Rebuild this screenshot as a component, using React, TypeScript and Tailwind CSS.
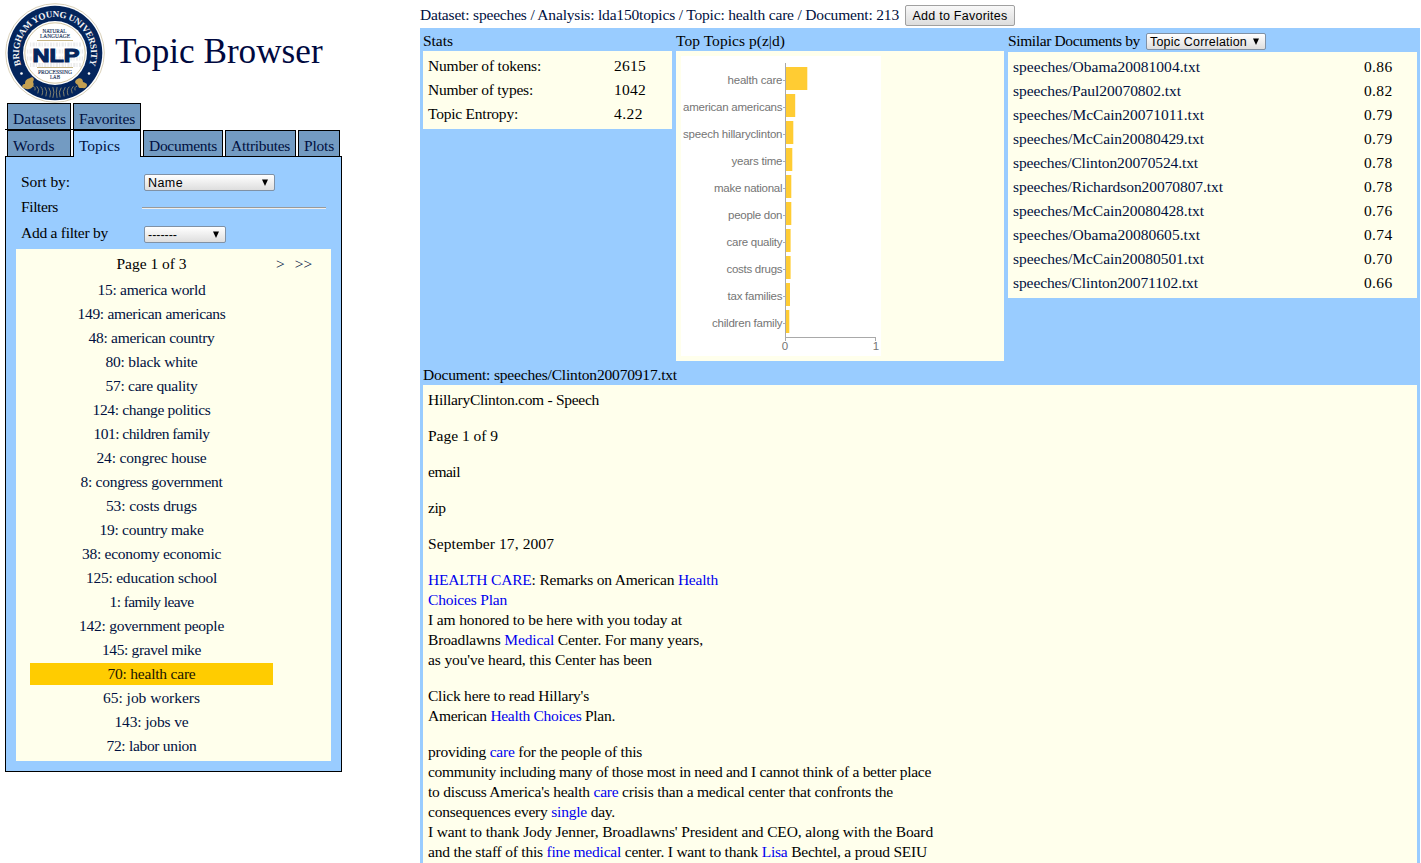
import { useLayoutEffect, useRef, useState } from "react";
import type { ReactNode } from "react";

const topics: [string, number][] = [
  ["15: america world", 108], ["149: american americans", 148], ["48: american country", 126],
  ["80: black white", 92], ["57: care quality", 92], ["124: change politics", 118],
  ["101: children family", 116], ["24: congrec house", 110], ["8: congress government", 142],
  ["53: costs drugs", 91], ["19: country make", 104], ["38: economy economic", 139],
  ["125: education school", 131], ["1: family leave", 84], ["142: government people", 145],
  ["145: gravel mike", 99], ["70: health care", 88], ["65: job workers", 97],
  ["143: jobs ve", 74], ["72: labor union", 90],
];

const stats: [string, number, string, number][] = [
  ["Number of tokens:", 113, "2615", 32],
  ["Number of types:", 105, "1042", 32],
  ["Topic Entropy:", 90, "4.22", 29],
];

const similar: [string, number, string][] = [
  ["speeches/Obama20081004.txt", 187, "0.86"],
  ["speeches/Paul20070802.txt", 168, "0.82"],
  ["speeches/McCain20071011.txt", 191, "0.79"],
  ["speeches/McCain20080429.txt", 191, "0.79"],
  ["speeches/Clinton20070524.txt", 185, "0.78"],
  ["speeches/Richardson20070807.txt", 210, "0.78"],
  ["speeches/McCain20080428.txt", 191, "0.76"],
  ["speeches/Obama20080605.txt", 187, "0.74"],
  ["speeches/McCain20080501.txt", 191, "0.70"],
  ["speeches/Clinton20071102.txt", 185, "0.66"],
];

const bars: [string, number, number][] = [
  ["health care", 21.3, 55],
  ["american americans", 9.2, 99.5],
  ["speech hillaryclinton", 7.3, 99.5],
  ["years time", 6.3, 51],
  ["make national", 5.3, 68.5],
  ["people don", 5.3, 54.5],
  ["care quality", 4.6, 56],
  ["costs drugs", 4.6, 56],
  ["tax families", 4, 55],
  ["children family", 3.3, 70.5],
];

/** Spaces the letters of one line so that it takes the given width. */
function Fit({ w, children }: { w: number; children: ReactNode }) {
  const ref = useRef<HTMLSpanElement>(null);
  const [spacing, setSpacing] = useState(0);
  useLayoutEffect(() => {
    const el = ref.current;
    if (!el) return;
    const count = Math.max(1, (el.textContent ?? "").length);
    const natural = el.getBoundingClientRect().width - spacing * count;
    const next = (w - natural) / count;
    if (Math.abs(next - spacing) > 0.01) setSpacing(next);
  }, [w, spacing]);
  return (
    <span ref={ref} className="inline-block whitespace-nowrap" style={{ letterSpacing: spacing }}>
      {children}
    </span>
  );
}

function Logo() {
  return (
    <svg width="100" height="100" viewBox="0 0 100 100" className="shrink-0">
      <defs>
        <path id="ring" d="M 16 62 A 36 36 0 1 1 84 62" />
      </defs>
      <circle cx="50" cy="50" r="49.3" fill="#fff" stroke="#d9d0b8" strokeWidth="1" />
      <circle cx="50" cy="50" r="47.3" fill="#04255c" />
      <circle cx="50" cy="50" r="32" fill="#fff" />
      <circle cx="50" cy="50" r="30.2" fill="#fff" stroke="#c8b88c" strokeWidth="0.8" />
      <text fontFamily="Liberation Serif, serif" fontWeight="bold" fontSize="9.200" fill="#f4f4f4">
        <textPath href="#ring" textLength="137" lengthAdjust="spacing">BRIGHAM YOUNG UNIVERSITY</textPath>
      </text>
      <circle cx="16.500" cy="70.500" r="1.300" fill="#fff" />
      <circle cx="84" cy="70.500" r="1.300" fill="#fff" />
      <path d="M25 41.500H76M22 48.500H78M22 55.500H78M25 62H76" stroke="#ececec" strokeWidth="4" strokeDasharray="1.200 1.400 2.200 1" />
      <g fontFamily="Liberation Serif, serif" fontSize="5.400" fill="#22365c" stroke="#22365c" strokeWidth="0.150" textAnchor="middle">
        <text x="49.500" y="30.300" textLength="24" lengthAdjust="spacingAndGlyphs">NATURAL</text>
        <text x="50" y="35" textLength="30" lengthAdjust="spacingAndGlyphs">LANGUAGE</text>
        <text x="50" y="71" textLength="34" lengthAdjust="spacingAndGlyphs">PROCESSING</text>
        <text x="50" y="75.500" textLength="10" lengthAdjust="spacingAndGlyphs">LAB</text>
      </g>
      <path d="M32 37.500H68M32 64.500H68" stroke="#c0ad78" strokeWidth="0.900" />
      <text x="51" y="58.600" textAnchor="middle" textLength="47" lengthAdjust="spacingAndGlyphs" fontFamily="Liberation Sans, sans-serif" fontWeight="bold" fontSize="19" fill="#04255c" stroke="#04255c" strokeWidth="1.100">NLP</text>
      <path fill="none" stroke="#8e8b70" strokeWidth="0.900" strokeLinecap="round" d="M28 83Q31 84 30 87M32 83.500Q35 86 33 90M36 84Q39 87 37 92M40 84.500Q43 88 41 93M44 85Q47 89 45 94M48 84.500Q50 89 48 94.500M72 83Q69 84 70 87M68 83.500Q65 86 67 90M64 84Q61 87 63 92M60 84.500Q57 88 59 93M56 85Q53 89 55 94M52 84.500Q50.500 89 52 94.500" />
      <path d="M25 75c3-2 5 1 3 4 2 3-1 7-4 7-3 1-4-1-6-1-2-2 0-4 2-4 0-4 2-5 5-6z" fill="#c4a052" />
      <path d="M71 77c-2 2 0 4 2 5 0 4 3 3 5 3 3 1 4-2 4-3 0-2-2-2-4-3 0-4-4-5-7-2z" fill="#c4a052" />
    </svg>
  );
}

function Select({ label, w, className }: { label: string; w: number; className: string }) {
  return (
    <div className={"flex h-[17px] items-center justify-between rounded-[2px] border border-[#8091a5] bg-linear-to-b from-white to-[#dedede] pr-[6px] pl-[3px] font-['Liberation_Sans',sans-serif] text-[12.5px] leading-[15px] text-black " + className}>
      <span className="pt-px"><Fit w={w}>{label}</Fit></span>
      <svg width="6" height="7" viewBox="0 0 6 7"><path d="M0 0.500H6L3 7z" fill="#000" /></svg>
    </div>
  );
}

function Tab({ children, w, className }: { children: ReactNode; w: number; className: string }) {
  return (
    <div className={"border-x border-t border-black pl-[5px] leading-[30px] text-[#001040] " + className}>
      <Fit w={w}>{children}</Fit>
    </div>
  );
}

function Chart() {
  return (
    <svg width="200" height="300" viewBox="0 0 200 300" fontFamily="Liberation Sans, sans-serif" fontSize="11.500" fill="#757575">
      <rect width="200" height="300" fill="#fff" />
      {bars.map(([name, w, len], i) => (
        <g key={name}>
          <text x="101.500" y={28 + i * 27} textAnchor="end" textLength={len}>{name}</text>
          <rect x="102" y={24 + i * 27} width="3" height="1" fill="#b0b0b0" />
          <rect x="105" y={11 + i * 27} width={w} height="23" fill="#ffcc33" />
        </g>
      ))}
      <path d="M104.500 7V285M104 281.500H195M194.500 281V285" stroke="#a9a9a9" fill="none" />
      <text x="104" y="294" textAnchor="middle">0</text>
      <text x="195" y="294" textAnchor="middle">1</text>
    </svg>
  );
}

function K({ children }: { children: ReactNode }) {
  return <span className="text-[#0000ee]">{children}</span>;
}

function Line({ w, children }: { w: number; children: ReactNode }) {
  return <div className="h-[20px]"><Fit w={w}>{children}</Fit></div>;
}

export default function App() {
  return (
    <div className="flex h-[863px] w-[1421px] overflow-hidden bg-white font-['Liberation_Serif',serif] text-[15.5px] leading-[20px] text-black">
      <aside className="w-[420px] shrink-0 pt-[3px] pl-[5px]">
        <header className="flex h-[100px]">
          <Logo />
          <h1 className="pt-[27px] pl-[10px] text-[35.2px] leading-[44px] whitespace-nowrap text-[#00093f]">Topic Browser</h1>
        </header>
        <nav className="w-[337px]">
          <div className="flex gap-[2px] pl-[2px]">
            <Tab w={53} className="h-[26px] w-[64px] bg-[#739bc2]">Datasets</Tab>
            <Tab w={56} className="h-[26px] w-[68px] bg-[#739bc2]">Favorites</Tab>
          </div>
          <div className="h-px w-[136px] bg-black" />
          <div className="flex gap-[2px] pl-[2px]">
            <Tab w={42} className="h-[26px] w-[64px] bg-[#739bc2]">Words</Tab>
            <Tab w={41} className="relative -mb-px h-[27px] w-[68px] bg-[#99ccff]">Topics</Tab>
            <Tab w={68} className="h-[26px] w-[80px] bg-[#739bc2]">Documents</Tab>
            <Tab w={59} className="h-[26px] w-[71px] bg-[#739bc2]">Attributes</Tab>
            <Tab w={30} className="h-[26px] w-[42px] bg-[#739bc2]">Plots</Tab>
          </div>
        </nav>
        <section className="h-[616px] w-[337px] border border-black bg-[#99ccff] px-[10px] pt-[13px]">
          <div className="flex h-[25px] items-center pl-[5px]">
            <span className="w-[123px] pb-[2px]"><Fit w={49}>Sort by:</Fit></span>
            <Select label="Name" w={35} className="w-[131px]" />
          </div>
          <div className="flex h-[25px] items-center pl-[5px]">
            <span className="w-[121px] pb-[2px]"><Fit w={37}>Filters</Fit></span>
            <div className="h-[2px] w-[184px] border-t border-b border-t-[#9a9a9a] border-b-[#eeeeee]" />
          </div>
          <div className="flex h-[29px] items-center pl-[5px]">
            <span className="w-[123px] pb-[3px]"><Fit w={87}>Add a filter by</Fit></span>
            <Select label="-------" w={29} className="w-[82px]" />
          </div>
          <div className="h-[512px] w-[315px] bg-[#ffffec]">
            <div className="flex h-[29px] pl-[14px] leading-[30px]">
              <span className="w-[243px] text-center"><Fit w={70}>Page 1 of 3</Fit></span>
              <span className="pl-[3px] text-[#001040]">&gt;</span>
              <span className="pl-[10px] text-[#001040]">&gt;&gt;</span>
            </div>
            <ul className="ml-[14px] flex w-[243px] flex-col gap-[2px] pt-px text-center">
              {topics.map(([t, w]) => (
                <li key={t} className={t === "70: health care" ? "h-[22px] bg-[#ffcc00] leading-[22px] text-[#1a1400]" : "h-[22px] leading-[22px] text-[#001040]"}><Fit w={w}>{t}</Fit></li>
              ))}
            </ul>
          </div>
        </section>
      </aside>

      <main className="flex w-[1000px] shrink-0 flex-col">
        <div className="flex h-[28px] shrink-0 text-[#001040]">
          <span className="w-[485px] shrink-0 pt-[5px]"><Fit w={479}>Dataset: speeches / Analysis: lda150topics / Topic: health care / Document: 213</Fit></span>
          <button className="mt-[5px] h-[21px] w-[110px] rounded-[2px] border border-[#a0a0a0] bg-linear-to-b from-[#f8f8f8] to-[#dddddd] pt-px font-['Liberation_Sans',sans-serif] text-[12.5px] leading-[18px] text-black"><Fit w={95}>Add to Favorites</Fit></button>
        </div>
        <div className="flex min-h-0 grow flex-col bg-[#99ccff] px-[3px]">
          <div className="flex h-[333px] shrink-0 items-start gap-[4px]">
            <section className="w-[249px]">
              <h2 className="h-[23px] leading-[26px]"><Fit w={30}>Stats</Fit></h2>
              <div className="bg-[#ffffec] py-[3px] pl-[5px]">
                {stats.map(([k, w, v, vw]) => (
                  <div key={k} className="flex h-6 leading-6"><span className="w-[186px]"><Fit w={w}>{k}</Fit></span><Fit w={vw}>{v}</Fit></div>
                ))}
              </div>
            </section>
            <section className="w-[328px]">
              <h2 className="h-[23px] leading-[26px]"><Fit w={109}>Top Topics p(z|d)</Fit></h2>
              <div className="h-[310px] bg-[#ffffec] p-[5px]"><Chart /></div>
            </section>
            <section className="w-[409px]">
              <h2 className="flex h-[24px] leading-[26px]"><span className="w-[138px]"><Fit w={132}>Similar Documents by</Fit></span><Select label="Topic Correlation" w={97} className="mt-[5px] w-[120px]" /></h2>
              <div className="bg-[#ffffec] py-[3px] pl-[5px]">
                {similar.map(([k, w, v]) => (
                  <div key={k} className="flex h-6 leading-6"><span className="w-[351px] text-[#001040]"><Fit w={w}>{k}</Fit></span><Fit w={28.5}>{v}</Fit></div>
                ))}
              </div>
            </section>
          </div>
          <h2 className="h-[24px] shrink-0 leading-[28px]"><Fit w={254}>Document: speeches/Clinton20070917.txt</Fit></h2>
          <article className="min-h-0 grow space-y-[16px] overflow-hidden bg-[#ffffec] p-[5px]">
            <Line w={171}>HillaryClinton.com - Speech</Line>
            <Line w={70}>Page 1 of 9</Line>
            <Line w={32}>email</Line>
            <Line w={17.5}>zip</Line>
            <Line w={126}>September 17, 2007</Line>
            <div>
              <Line w={290}><K>HEALTH CARE</K>: Remarks on American <K>Health</K></Line>
              <Line w={79}><K>Choices Plan</K></Line>
              <Line w={254}>I am honored to be here with you today at</Line>
              <Line w={275}>Broadlawns <K>Medical</K> Center. For many years,</Line>
              <Line w={224}>as you've heard, this Center has been</Line>
            </div>
            <div>
              <Line w={161}>Click here to read Hillary's</Line>
              <Line w={187}>American <K>Health Choices</K> Plan.</Line>
            </div>
            <div>
              <Line w={214}>providing <K>care</K> for the people of this</Line>
              <Line w={503}>community including many of those most in need and I cannot think of a better place</Line>
              <Line w={465}>to discuss America's health <K>care</K> crisis than a medical center that confronts the</Line>
              <Line w={187}>consequences every <K>single</K> day.</Line>
              <Line w={505}>I want to thank Jody Jenner, Broadlawns' President and CEO, along with the Board</Line>
              <Line w={499}>and the staff of this <K>fine medical</K> center. I want to thank <K>Lisa</K> Bechtel, a proud SEIU</Line>
            </div>
          </article>
        </div>
      </main>
    </div>
  );
}
